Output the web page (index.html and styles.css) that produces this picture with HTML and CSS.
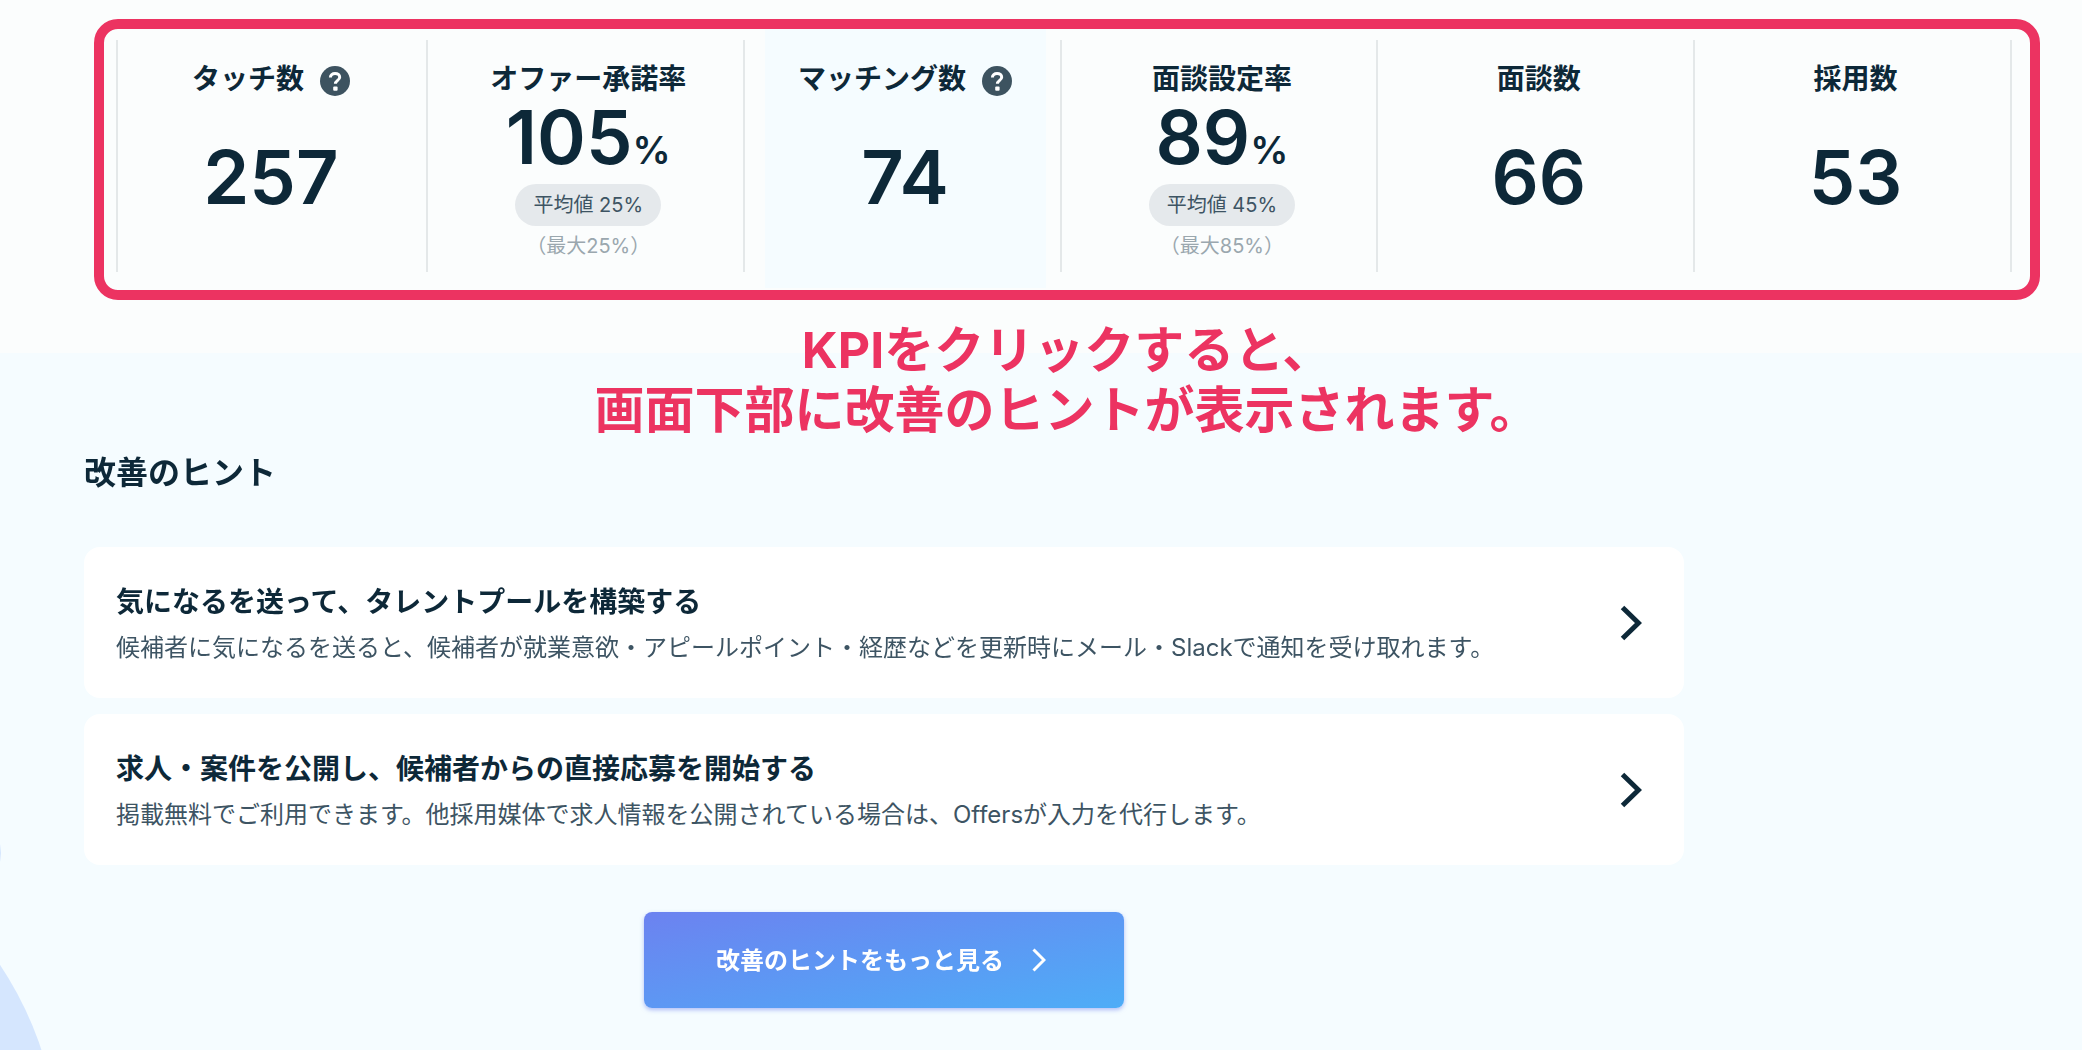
FILE: index.html
```html
<!DOCTYPE html>
<html lang="ja">
<head>
    <meta charset="utf-8">
    <title>改善のヒント</title>
    <link rel="stylesheet" href="styles.css">
</head>
<body>
    <div class="blob"></div>
    <div class="blob-small"></div>

    <!-- KPI -->
    <section class="kpi">
        <ul class="kpi-list">
            <li>
                <button type="button" class="kpi-item">
                    <span class="label">タッチ数
                        <svg class="help" viewBox="0 0 30 30"><circle cx="15" cy="15" r="15"/><path d="M10.4 11.6c0-2.6 2-4.2 4.7-4.2s4.6 1.5 4.6 3.8c0 3.1-4.3 3.2-4.3 6.6"/><rect x="13.2" y="20.4" width="4.4" height="4.4" rx="1"/></svg>
                    </span>
                    <span class="value">257</span>
                </button>
            </li>
            <li>
                <button type="button" class="kpi-item rate">
                    <span class="label">オファー承諾率</span>
                    <span class="value">105<small>%</small></span>
                    <span class="average">平均値 25%</span>
                    <span class="max">（最大25%）</span>
                </button>
            </li>
            <li>
                <button type="button" class="kpi-item active">
                    <span class="label">マッチング数
                        <svg class="help" viewBox="0 0 30 30"><circle cx="15" cy="15" r="15"/><path d="M10.4 11.6c0-2.6 2-4.2 4.7-4.2s4.6 1.5 4.6 3.8c0 3.1-4.3 3.2-4.3 6.6"/><rect x="13.2" y="20.4" width="4.4" height="4.4" rx="1"/></svg>
                    </span>
                    <span class="value">74</span>
                </button>
            </li>
            <li>
                <button type="button" class="kpi-item rate">
                    <span class="label">面談設定率</span>
                    <span class="value">89<small>%</small></span>
                    <span class="average">平均値 45%</span>
                    <span class="max">（最大85%）</span>
                </button>
            </li>
            <li>
                <button type="button" class="kpi-item">
                    <span class="label">面談数</span>
                    <span class="value">66</span>
                </button>
            </li>
            <li>
                <button type="button" class="kpi-item">
                    <span class="label">採用数</span>
                    <span class="value">53</span>
                </button>
            </li>
        </ul>
        <p class="callout">KPIをクリックすると、<br>画面下部に改善のヒントが表示されます。</p>
    </section>

    <!-- Hints -->
    <section class="hints">
        <h2>改善のヒント</h2>
        <a href="#" class="card">
            <div>
                <h3>気になるを送って、タレントプールを構築する</h3>
                <p>候補者に気になるを送ると、候補者が就業意欲・アピールポイント・経歴などを更新時にメール・Slackで通知を受け取れます。</p>
            </div>
            <svg class="arrow" viewBox="0 0 22 36"><path d="M2.5 2.5L18.5 18L2.5 33.5"/></svg>
        </a>
        <a href="#" class="card">
            <div>
                <h3>求人・案件を公開し、候補者からの直接応募を開始する</h3>
                <p>掲載無料でご利用できます。他採用媒体で求人情報を公開されている場合は、Offersが入力を代行します。</p>
            </div>
            <svg class="arrow" viewBox="0 0 22 36"><path d="M2.5 2.5L18.5 18L2.5 33.5"/></svg>
        </a>
        <button type="button" class="more">改善のヒントをもっと見る
            <svg viewBox="0 0 14 24"><path d="M1.5 1.5L12 12L1.5 22.5"/></svg>
        </button>
    </section>
</body>
</html>
```
FILE: styles.css
```css
* { box-sizing: border-box; }

body {
    margin: 0;
    min-height: 100vh;
    position: relative;
    overflow-x: hidden;
    background: #f5fcff;
    color: #0d2838;
    font-family: Inter, "Noto Sans CJK JP", sans-serif;
}

h2, h3, p, ul { margin: 0; padding: 0; }
button { font-family: inherit; color: inherit; border: 0; cursor: pointer; }

/* Background shapes, cut off by the left edge */
.blob, .blob-small {
    position: fixed;
    border-radius: 50%;
    background: #d5e6fe;
}
.blob {
    left: -662px;
    bottom: -475px;
    width: 722px;
    height: 722px;
}
.blob-small {
    left: -79px;
    bottom: 157px;
    width: 80px;
    height: 80px;
}

/* KPI row */
.kpi {
    position: relative;
    z-index: 1;
    padding: 19px 42px 53px 94px;
    background: #fbfdfd;
}
.kpi-list {
    display: grid;
    grid-template-columns: 310fr repeat(5, 317fr);
    padding: 0 20px 2px 12px;
    border: 10px solid #ec3361;
    border-radius: 24px;
    list-style: none;
}
.kpi-list li {
    position: relative;
    display: flex;
    padding: 0 14px 0 22px;
}
.kpi-list li:first-child { padding: 0 16px; }

/* Dividers */
.kpi-list li::before,
.kpi-list li:last-child::after {
    content: "";
    position: absolute;
    top: 11px;
    bottom: 16px;
    left: 0;
    width: 2px;
    background: #e4e8e9;
}
.kpi-list li:last-child::after {
    left: auto;
    right: -2px;
}

.kpi-item {
    flex: 1;
    display: flex;
    flex-direction: column;
    align-items: center;
    height: 259px;
    padding: 29px 0 0;
    background: none;
}
.kpi-item.active { background: #f5fcff; }
.label {
    display: flex;
    align-items: center;
    gap: 16px;
    font-size: 28px;
    line-height: 42px;
    font-weight: bold;
}
.help {
    width: 30px;
    height: 30px;
    margin-top: 4px;
    fill: #3d5360;
}
.help path { fill: none; stroke: #fff; stroke-width: 3; }
.help rect { fill: #fff; }
.value {
    margin-top: 40px;
    font-size: 74px;
    line-height: 74px;
    font-weight: 600;
}
.rate .value { margin-top: 0; }
.value small {
    font-size: 38px;
    line-height: 38px;
}
.average {
    margin-top: 10px;
    padding: 0 18px;
    border-radius: 21px;
    background: #e5e9ec;
    color: #3d5463;
    font-size: 20px;
    line-height: 42px;
}
.max {
    color: #9aa7ae;
    font-size: 20px;
    line-height: 40px;
}

/* Note over the edge of the two sections */
.callout {
    position: absolute;
    top: 320px;
    left: 94px;
    right: 42px;
    color: #ec3361;
    font-size: 50px;
    line-height: 60px;
    font-weight: bold;
    text-align: center;
}

/* Hints */
.hints {
    position: relative;
    display: flex;
    flex-direction: column;
    gap: 16px;
    width: calc(100% - 84px);
    max-width: 1684px;
    padding: 96px 0 42px 84px;
}
h2 {
    margin-bottom: 34px;
    font-size: 32px;
    line-height: 48px;
}
.card {
    display: flex;
    align-items: center;
    justify-content: space-between;
    padding: 30px 42px 29px 32px;
    border-radius: 16px;
    background: #fff;
    color: inherit;
    text-decoration: none;
}
.card h3 {
    font-size: 28px;
    line-height: 50px;
}
.card p {
    color: #3d5463;
    font-size: 24px;
    line-height: 42px;
}
.arrow {
    flex: none;
    width: 22px;
    height: 36px;
}
.arrow path { fill: none; stroke: #0d2838; stroke-width: 5; }

.more {
    display: flex;
    align-items: center;
    justify-content: center;
    align-self: center;
    gap: 28px;
    width: 480px;
    height: 96px;
    margin-top: 31px;
    padding: 0 6px 4px 0;
    border-radius: 8px;
    background: linear-gradient(to bottom right, #6c82f0, #4eadf7);
    box-shadow: 0 2px 4px rgba(108, 130, 240, 0.5);
    color: #fff;
    font-size: 24px;
    font-weight: bold;
}
.more svg {
    width: 14px;
    height: 24px;
    margin-top: 4px;
}
.more path { fill: none; stroke: #fff; stroke-width: 3; }
```
